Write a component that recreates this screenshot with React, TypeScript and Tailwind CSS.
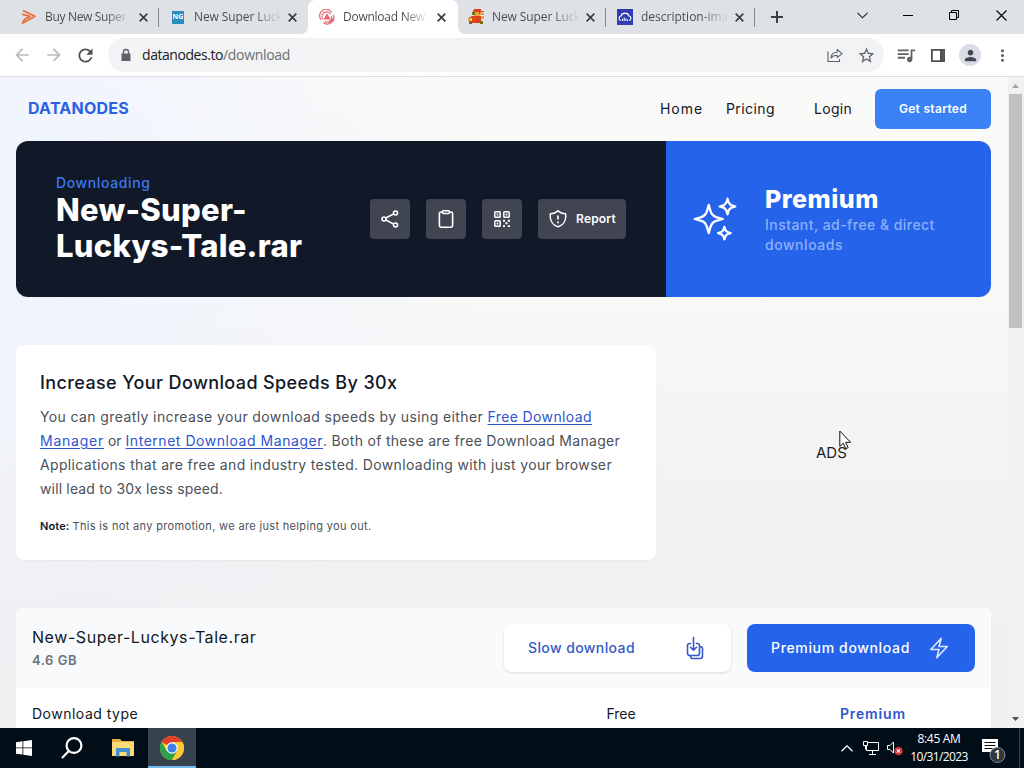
import React from 'react';
import {
  MdArrowBack,
  MdArrowForward,
  MdRefresh,
  MdLock,
  MdStarOutline,
  MdQueueMusic,
  MdPerson,
  MdMoreVert,
} from 'react-icons/md';

interface TabData {
  title: string;
  icon: React.ReactNode;
  tracking: string;
  active?: boolean;
  separator?: boolean;
}

const TABS: TabData[] = [
  {
    title: 'Buy New Super',
    tracking: 'tracking-[-0.33px]',
    separator: true,
    icon: (
      <svg width="16" height="16" viewBox="0 0 16 16" fill="none" stroke="#ee6c3b" strokeWidth="1.7" strokeLinejoin="round">
        <path d="M2 1.5 14 7.2 1.500 14.200 3.500 10.500 9 7.400 1 5.200" />
      </svg>
    ),
  },
  {
    title: 'New Super Luck',
    tracking: 'tracking-[-0.1px]',
    icon: (
      <div className="mx-auto flex h-[13px] w-3 items-center justify-center bg-[#2a8cc0] font-['Open_Sans'] text-[7px] font-bold text-white">
        NG
      </div>
    ),
  },
  {
    title: 'Download New',
    tracking: 'tracking-[-0.25px]',
    active: true,
    icon: (
      <svg width="16" height="16" viewBox="0 0 16 16" fill="none" stroke="#e66a6f" strokeWidth="1.2" strokeLinecap="round">
        <path d="M1.800 10.500A6.500 6.500 0 0 1 12.500 3M14.300 6A6.500 6.500 0 0 1 4.500 13.800M3.800 10A4.500 4.500 0 0 1 11.200 4.700M12.500 7.500A4.500 4.500 0 0 1 6 12.500M14 9.500a6.500 6.500 0 0 1-4 4.500" />
        <path d="M8 5.500 5.500 10h5.200Z" fill="#e66a6f" />
      </svg>
    ),
  },
  {
    title: 'New Super Luck',
    tracking: 'tracking-[-0.1px]',
    separator: true,
    icon: (
      <svg width="16" height="16" viewBox="0 0 16 16" shapeRendering="crispEdges">
        <path d="M6 0h7v2h3v1H5V1h1z" fill="#d9441c" />
        <path d="M5 3h9v1h2v2h-4v1H6z" fill="#e9a13a" />
        <path d="M4 3h3v3H4zM11 3h1v2h-1z" fill="#6f7412" />
        <path d="M3 7h10v2H1V8h2z" fill="#a5621a" />
        <path d="M4 7h9v7H4z" fill="#dd401d" />
        <path d="M0 9h3v3H0zM13 7h3v3h-3zM6 9h1v1H6z" fill="#eda63c" />
        <path d="M1 12h3v3H1zM12 12h3v3h-3z" fill="#7d6a15" />
      </svg>
    ),
  },
  {
    title: 'description-ima',
    tracking: 'tracking-[0px]',
    separator: true,
    icon: (
      <svg width="16" height="16" viewBox="0 0 16 16">
        <path d="M0 0h16v16H0z" fill="#2f3cb4" />
        <path d="M3.800 11.500A2.300 2.300 0 0 1 4 7 4.200 4.200 0 0 1 12 7a2.300 2.300 0 0 1 .2 4.500" fill="none" stroke="#fff" strokeWidth="1.100" />
        <path d="M5.500 12V9.800M7.200 12V8.500M8.900 12V9.500M10.600 12v-1.700" stroke="#fff" strokeWidth="1" />
      </svg>
    ),
  },
];

const Tab: React.FC<{ tab: TabData }> = ({ tab }) => (
  <div className="relative flex h-[34px] w-[149px] shrink-0 items-center">
    {tab.active && (
      <svg className="absolute -left-2 top-0" width="166" height="34" viewBox="0 0 166 34" fill="#fff">
        <path d="M0 34q8 0 8-8V8q0-8 8-8h134q8 0 8 8v18q0 8 8 8z" />
      </svg>
    )}
    <div className="relative flex w-full items-center pl-[11px]">
      <div className="w-4">{tab.icon}</div>
      <div
        className={`ml-2 w-[86px] whitespace-nowrap bg-gradient-to-r from-[#45494d] from-70% to-[#45494d]/15 to-95% bg-clip-text text-xs text-transparent ${tab.tracking}`}
      >
        {tab.title}
      </div>
      <svg className="ml-2" width="9" height="9" viewBox="0 0 9 9" stroke="#3c4043" strokeWidth="1.7">
        <path d="m.7.7 7.6 7.6M8.3.7.7 8.3" />
      </svg>
    </div>
    {tab.separator && <div className="absolute right-0 top-2 h-[19px] w-px bg-[#85898e]" />}
  </div>
);

const TabStrip = () => (
  <div className="flex h-[34px] bg-[#dee1e6] pl-2.5">
    {TABS.map((tab, i) => (
      <Tab key={i} tab={tab} />
    ))}
    <div className="flex flex-1 items-center">
      <svg className="ml-4 shrink-0" width="12" height="12" viewBox="0 0 12 12" stroke="#3c4043" strokeWidth="2">
        <path d="M6 0v12M0 6h12" />
      </svg>
      <svg className="mb-1 ml-[74px] shrink-0" width="11" height="7" viewBox="0 0 11 7" fill="none" stroke="#222" strokeWidth="1.1">
        <path d="m.5.8 5 5 5-5" />
      </svg>
      <svg className="mb-1 ml-[35px] shrink-0" width="11" height="11" viewBox="0 0 11 11" stroke="#000">
        <path d="M0 5.5h10" />
      </svg>
      <svg className="mb-1 ml-[35px] shrink-0" width="11" height="11" viewBox="0 0 11 11" fill="none" stroke="#000">
        <path d="M.5 2.500h7v7h-7zM2.500 2V.5h7v7H8" />
      </svg>
      <svg className="mb-1 ml-9 shrink-0" width="11" height="11" viewBox="0 0 11 11" stroke="#000" strokeWidth="1.1">
        <path d="m.5.5 10 10M10.5.5l-10 10" />
      </svg>
    </div>
  </div>
);

const Toolbar = () => (
  <div className="flex h-[43px] items-center border-b border-[#dddee1] bg-white pl-3 text-[#5f6368]">
    <MdArrowBack size={20} className="text-[#b9bbbe]" />
    <MdArrowForward size={20} className="ml-3 text-[#b9bbbe]" />
    <MdRefresh size={21} className="ml-[11px] text-[#4b4f53]" />
    <div className="ml-3 flex h-[34px] w-[776px] items-center rounded-full bg-[#f1f3f4] pl-[11px] text-sm">
      <svg width="14" height="14" viewBox="0 0 14 14" fill="#5f6368">
        <path d="M2.500 5.500h9v7.500h-9z" />
        <path d="M4.500 6V4a2.500 2.500 0 0 1 5 0v2" fill="none" stroke="#5f6368" strokeWidth="1.400" />
      </svg>
      <span className="ml-[9px] tracking-[-0.44px] text-[#202124]">datanodes.to</span>
      <span className="tracking-[-0.32px] text-[#6b6f74]">/download</span>
      <svg className="ml-auto" width="16" height="16" viewBox="0 0 16 16" fill="none" stroke="#5f6368" strokeWidth="1.1">
        <path d="M1 4.5v10h11.5v-2.5" />
        <path d="M4 11c.2-4 2.500-5.700 6.200-5.700V2.500L15 6.700l-4.800 4V8.200C7.300 8.100 5.400 9 4 11z" strokeLinejoin="round" />
      </svg>
      <MdStarOutline size={19} className="ml-[14px] mr-2" />
    </div>
    <MdQueueMusic size={22} className="ml-[11px]" />
    <svg className="ml-[14px]" width="14" height="13" viewBox="0 0 14 13" fill="none" stroke="#4d5155" strokeWidth="1.8">
      <path d="M.9.9h12.200v11.200H.9z" />
      <path d="M10.800 1v11" strokeWidth="3.600" />
    </svg>
    <div className="ml-[14px] flex size-[22px] items-center justify-center rounded-full bg-[#dadce6] text-[#414758]">
      <MdPerson size={17} />
    </div>
    <MdMoreVert size={19} className="ml-3" />
  </div>
);

const Nav = () => (
  <nav className="flex h-16 items-center pl-3">
    <span className="mb-0.5 text-base font-bold tracking-[0.235px] text-[#2a62e0]">DATANODES</span>
    <div className="ml-auto flex items-center text-sm text-[#111827]">
      <span className="w-[66px] tracking-[0.94px]">Home</span>
      <span className="w-[88px] tracking-[0.42px]">Pricing</span>
      <span className="w-[61px] tracking-[0.29px]">Login</span>
    </div>
    <button className="h-10 w-[116px] rounded-md bg-[#3b82f6] text-xs font-semibold tracking-[0.3px] text-white">
      Get started
    </button>
  </nav>
);

const HeroButton: React.FC<{ className: string; children: React.ReactNode }> = ({ className, children }) => (
  <button className={`flex h-10 items-center justify-center rounded bg-[#414552] text-white ${className}`}>
    {children}
  </button>
);

const Hero = () => (
  <section className="flex h-[156px] overflow-hidden rounded-xl">
    <div className="flex w-[650px] items-center bg-[#111827] px-10">
      <div className="whitespace-nowrap">
        <p className="text-sm font-medium leading-5 tracking-[0.62px] text-[#3b78ef]">Downloading</p>
        <h1 className="-mt-px mb-px text-[31px] font-extrabold leading-9 text-white">
          <span className="block tracking-[0.25px]">New-Super-</span>
          <span className="block tracking-[0.25px]">Luckys-Tale.rar</span>
        </h1>
      </div>
      <div className="ml-auto flex gap-4">
        <HeroButton className="w-10">
          <svg width="20" height="20" viewBox="0 0 20 20" fill="none" stroke="currentColor" strokeWidth="1.600">
            <circle cx="4" cy="10" r="2" />
            <circle cx="15.500" cy="4" r="2" />
            <circle cx="15.500" cy="16" r="2" />
            <path d="m5.800 9 7.900-4.100M5.800 11l7.900 4.100" />
          </svg>
        </HeroButton>
        <HeroButton className="w-10">
          <svg width="20" height="20" viewBox="0 0 20 20" fill="none" stroke="currentColor" strokeWidth="1.600" strokeLinejoin="round">
            <path d="M6.500 3H5a1.600 1.600 0 0 0-1.600 1.600v12A1.600 1.600 0 0 0 5 18.200h10a1.600 1.600 0 0 0 1.600-1.600v-12A1.600 1.600 0 0 0 15 3h-1.500" />
            <rect x="6.500" y="1.700" width="7" height="2.800" rx="1.300" />
          </svg>
        </HeroButton>
        <HeroButton className="w-10">
          <svg width="16" height="16" viewBox="0 0 16 16" fill="none" stroke="currentColor" strokeWidth="1.500">
            <rect x=".8" y=".8" width="5.400" height="5.400" rx=".8" />
            <rect x="9.800" y=".8" width="5.400" height="5.400" rx=".8" />
            <rect x=".8" y="9.800" width="5.400" height="5.400" rx=".8" />
            <path d="M2.700 3.500h1.600M11.700 3.500h1.600M2.700 12.500h1.600M9 9.800h2M13.800 9.800H16M11.300 12.300h2.200M9 15.200h2M13.800 15.200H16" strokeWidth="1.900" />
          </svg>
        </HeroButton>
        <HeroButton className="w-[88px] gap-2">
          <svg width="20" height="20" viewBox="0 0 20 20" fill="none" stroke="currentColor" strokeWidth="1.500" strokeLinejoin="round">
            <path d="M10 1.900c2.100 1.900 4.700 2.900 7.500 2.800.2.900.3 1.700.3 2.600 0 4.900-3.100 9.100-7.800 10.500-4.700-1.400-7.800-5.600-7.800-10.500 0-.9.100-1.700.3-2.600 2.800.1 5.400-.9 7.500-2.800z" />
            <path d="M10 6.500v4M10 12.600v1.600" strokeWidth="1.700" />
          </svg>
          <span className="text-xs font-semibold tracking-[0.2px]">Report</span>
        </HeroButton>
      </div>
    </div>
    <div className="flex flex-1 items-center bg-[#2563eb] pl-6">
      <svg width="50" height="50" viewBox="0 0 24 24" fill="none" stroke="#fff" strokeWidth="1.100" strokeLinecap="round" strokeLinejoin="round">
        <path d="M9.813 15.904 9 18.750l-.813-2.846a4.500 4.500 0 0 0-3.090-3.090L2.250 12l2.846-.813a4.500 4.500 0 0 0 3.090-3.090L9 5.250l.813 2.846a4.500 4.500 0 0 0 3.090 3.090L15.750 12l-2.846.813a4.500 4.500 0 0 0-3.090 3.090ZM18.259 8.715 18 9.750l-.259-1.035a3.375 3.375 0 0 0-2.455-2.456L14.250 6l1.036-.259a3.375 3.375 0 0 0 2.455-2.456L18 2.250l.259 1.035a3.375 3.375 0 0 0 2.456 2.456L21.750 6l-1.035.259a3.375 3.375 0 0 0-2.456 2.456ZM16.894 20.567 16.500 21.750l-.394-1.183a2.250 2.250 0 0 0-1.423-1.423L13.500 18.750l1.183-.394a2.250 2.250 0 0 0 1.423-1.423l.394-1.183.394 1.183a2.250 2.250 0 0 0 1.423 1.423l1.183.394-1.183.394a2.250 2.250 0 0 0-1.423 1.423Z" />
      </svg>
      <div className="ml-[25px] whitespace-nowrap">
        <h2 className="text-[25px] font-extrabold leading-8 tracking-[0.5px] text-white">Premium</h2>
        <p className="text-sm font-medium leading-5 text-[#8bb1f8]">
          <span className="block tracking-[0.45px]">Instant, ad-free &amp; direct</span>
          <span className="block tracking-[0.54px]">downloads</span>
        </p>
      </div>
    </div>
  </section>
);

const SpeedCard = () => (
  <section className="h-[215px] w-[640px] whitespace-nowrap rounded-lg bg-white px-6 pt-6 shadow-[0_1px_2px_rgba(0,0,0,0.04)]">
    <h3 className="text-lg font-medium leading-7 tracking-[0.385px] text-[#111827]">
      Increase Your Download Speeds By 30x
    </h3>
    <div className="mt-2 text-sm leading-6 text-[#4b5058]">
      <p>
        <span className="tracking-[0.389px]">You can greatly increase your download speeds by using either </span>
        <a className="tracking-[0.386px] text-[#3054cf] underline underline-offset-2">Free Download</a>
      </p>
      <p>
        <a className="tracking-[0.76px] text-[#3054cf] underline underline-offset-2">Manager</a>
        <span> or </span>
        <a className="tracking-[0.54px] text-[#3054cf] underline underline-offset-2">Internet Download Manager</a>
        <span className="tracking-[0.3px]">. Both of these are free Download Manager</span>
      </p>
      <p className="tracking-[0.353px]">
        Applications that are free and industry tested. Downloading with just your browser
      </p>
      <p className="tracking-[0.156px]">will lead to 30x less speed.</p>
    </div>
    <p className="mt-[15px] text-[11px] leading-5 text-[#4b5058]">
      <span className="font-semibold tracking-[0.1px] text-[#111827]">Note:</span>{' '}
      <span className="tracking-[0.34px]">This is not any promotion, we are just helping you out.</span>
    </p>
  </section>
);

const DownloadPanel = () => (
  <section className="h-[140px] rounded-t-lg bg-white">
    <div className="flex h-20 items-center rounded-t-lg border-r border-white bg-[#f9fafc] px-4">
      <div className="mr-auto">
        <p className="-mt-px mb-px text-base leading-6 tracking-[0.57px] text-[#111827]">New-Super-Luckys-Tale.rar</p>
        <p className="text-[13px] font-semibold leading-5 tracking-[0.52px] text-[#6b7280]">4.6 GB</p>
      </div>
      <button className="flex h-12 w-[227px] items-center justify-between rounded-lg bg-white pl-6 pr-6 text-sm font-medium tracking-[0.4px] text-[#3459c8] shadow-[0_1px_3px_rgba(0,0,0,0.13)]">
        Slow download
        <svg width="24" height="24" viewBox="0 0 24 24" fill="none" stroke="currentColor" strokeWidth="1.600" strokeLinecap="round" strokeLinejoin="round">
          <path d="M7.500 7.500h-.750A2.250 2.250 0 0 0 4.500 9.750v7.500a2.250 2.250 0 0 0 2.250 2.250h7.500a2.250 2.250 0 0 0 2.250-2.250v-7.500a2.250 2.250 0 0 0-2.250-2.250h-.750m-6 3.750 3 3m0 0 3-3m-3 3V1.500m6 9h.750a2.250 2.250 0 0 1 2.250 2.250v7.500a2.250 2.250 0 0 1-2.250 2.250h-7.500a2.250 2.250 0 0 1-2.250-2.250v-.750" />
        </svg>
      </button>
      <button className="-mr-px ml-4 flex h-12 w-[228px] items-center justify-between rounded-lg bg-[#2563eb] px-6 text-sm font-medium tracking-[0.65px] text-white">
        Premium download
        <svg width="24" height="24" viewBox="0 0 24 24" fill="none" stroke="#dce8ff" strokeWidth="1.600" strokeLinecap="round" strokeLinejoin="round">
          <path d="m3.750 13.500 10.500-11.250L12 10.500h8.250L9.750 21.750 12 13.500H3.750Z" />
        </svg>
      </button>
    </div>
    <div className="grid h-[52px] grid-cols-[463px_252px_252px] items-center px-4 text-sm text-[#111827]">
      <span className="tracking-[0.5px]">Download type</span>
      <span className="text-center">Free</span>
      <span className="text-center font-semibold tracking-[0.86px] text-[#3058cc]">Premium</span>
    </div>
  </section>
);

const Cursor = () => (
  <svg className="absolute left-[23px] top-[-11px]" width="13" height="20" viewBox="0 0 13 20" fill="#fff" stroke="#111">
    <path d="M.8 1v15.500l3.500-3.300 2.400 5.500 2.400-1-2.400-5.400h4.900z" />
  </svg>
);

const Page = () => (
  <div className="flex h-[651px]">
    <main className="h-full flex-1 overflow-hidden bg-[radial-gradient(ellipse_500px_460px_at_0%_22%,#eef3fe_0%,rgba(238,243,254,0)_100%),linear-gradient(180deg,#fafaf8_0%,#f8f8f7_35%,#f2f1f3_70%,#efeef1_100%)] pl-4 pr-[17px] font-['Inter',sans-serif]">
      <Nav />
      <Hero />
      <div className="mt-12 flex items-center">
        <SpeedCard />
        <div className="relative ml-40 mt-px text-[15px] leading-6 text-[#1c1e22]">
          ADS
          <Cursor />
        </div>
      </div>
      <div className="mt-12">
        <DownloadPanel />
      </div>
    </main>
    <div className="flex w-4 flex-col items-center bg-[#f1f1f1] pr-px">
      <svg className="h-[17px]" width="7" height="17" viewBox="0 0 7 17" fill="#a3a3a3">
        <path d="M0 11h7L3.500 7z" />
      </svg>
      <div className="h-[234px] w-[13px] bg-[#c1c1c1]" />
      <svg className="mt-auto" width="7" height="17" viewBox="0 0 7 17" fill="#505050">
        <path d="M0 6h7l-3.500 4z" />
      </svg>
    </div>
  </div>
);

const Taskbar = () => (
  <div className="flex h-10 items-center bg-[#010d17] text-white">
    <div className="flex w-12 justify-center">
      <svg width="16" height="16" viewBox="0 0 16 16" fill="#fff">
        <path d="M0 2.200 6.500 1.300v6.200H0zM7.300 1.200 16 0v7.500H7.300zM0 8.300h6.500v6.300L0 13.700zM7.300 8.300H16V16l-8.700-1.300z" />
      </svg>
    </div>
    <div className="flex w-12 justify-center">
      <svg width="22" height="22" viewBox="0 0 22 22" fill="none" stroke="#fff" strokeWidth="2.200">
        <circle cx="13" cy="8.500" r="7.400" />
        <path d="m7.800 14-6.800 7" />
      </svg>
    </div>
    <div className="flex w-[52px] justify-center pl-0.5">
      <svg width="22" height="20" viewBox="0 0 22 20">
        <path d="M0 1h8l2 2h12v15H0z" fill="#e5ae3c" />
        <path d="M0 4h22v14H0z" fill="#fbdb77" />
        <path d="M4 18.500V11q0-1 1-1h12q1 0 1 1v7.500h-3.500V14h-7v4.500z" fill="#3f93cf" />
      </svg>
    </div>
    <div className="flex h-10 w-12 items-center justify-center border-b-2 border-[#76b9ed] bg-[#36434f] pt-0.5">
      <svg width="24" height="24" viewBox="0 0 24 24">
        <circle cx="12" cy="12" r="12" fill="#fbc934" />
        <path d="M12 12 1.600 6A12 12 0 0 1 22.400 6z" fill="#e2402f" />
        <path d="M1.600 6A12 12 0 0 0 12 24l5.200-9L12 12 6.800 15z" fill="#2da04e" />
        <path d="M12 24a12 12 0 0 0 10.400-18H12v6l5.200 3z" fill="#fbc934" />
        <circle cx="12" cy="12" r="5.800" fill="#fff" />
        <circle cx="12" cy="12" r="4.600" fill="#3a80e8" />
      </svg>
    </div>
    <div className="ml-auto flex h-full items-center">
      <svg width="12" height="7" viewBox="0 0 12 7" fill="none" stroke="#fff" strokeWidth="1.300">
        <path d="m.5 6.300 5.500-5.500 5.500 5.500" />
      </svg>
      <svg className="ml-[10px]" width="16" height="14" viewBox="0 0 16 14" fill="none" stroke="#fff">
        <path d="M5 1.500h10.500v8H3.500V5M9.500 10v3M6 13.500h7M.5.500h4v4h-4zM2.500 4.500v4" />
      </svg>
      <svg className="ml-2" width="16" height="16" viewBox="0 0 16 16" fill="none">
        <path d="M.5 5.500H3l3.500-3.500v11L3 9.500H.5z" stroke="#fff" />
        <circle cx="11.500" cy="11" r="4.300" fill="#c8313a" />
        <path d="m9.800 9.300 3.400 3.400M13.200 9.300l-3.400 3.400" stroke="#fff" strokeWidth="1.100" />
      </svg>
      <div className="ml-[5px] w-[62px] text-center text-xs leading-[18px]">
        <p className="tracking-[-0.32px]">8:45 AM</p>
        <p className="tracking-[-0.62px]">10/31/2023</p>
      </div>
      <div className="relative ml-3 mr-3 mt-1">
        <svg width="25" height="25" viewBox="0 0 25 25">
          <path d="M0 1h16v13h-4.500v4L7.500 14H0z" fill="#fff" />
          <path d="M2.500 4.500h11M2.500 7.500h11M2.500 10.500h8" stroke="#010d17" />
          <circle cx="15.500" cy="17" r="7.500" fill="#30373d" stroke="#85898c" />
        </svg>
        <span className="absolute left-[12px] top-[9px] text-xs font-semibold leading-4">1</span>
      </div>
      <div className="mr-1 h-full w-px bg-[#3c444c]" />
    </div>
  </div>
);

export default function App() {
  return (
    <div className="h-[768px] w-[1024px] overflow-hidden bg-white font-['Open_Sans',sans-serif]">
      <TabStrip />
      <Toolbar />
      <Page />
      <Taskbar />
    </div>
  );
}
